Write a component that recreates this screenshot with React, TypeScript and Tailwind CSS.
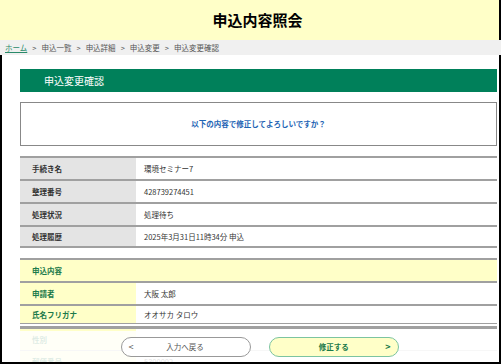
import React from "react";

const font = { fontFamily: '"Noto Sans CJK JP", "Noto Sans", sans-serif' };

function Row1({ label, value, last }: { label: string; value: string; last?: boolean }) {
  return (
    <div className={`flex h-[23px] border-t-2 border-[#a0a0a0] ${last ? "border-b-2" : ""}`}>
      <div className="w-[116px] bg-[#e4e4e4] pl-[12px] flex items-center text-[7.5px] font-bold text-[#333]">{label}</div>
      <div className="flex-1 pl-[8px] flex items-center text-[7.5px] text-[#333]">{value}</div>
    </div>
  );
}

function Row2({ label, value, cls }: { label: string; value: string; cls?: string }) {
  return (
    <div className={`flex h-[23px] border-t-2 border-[#a0a0a0] ${cls ?? ""}`}>
      <div className="w-[116px] bg-[#ffffc8] pl-[12px] flex items-center text-[7.5px] font-bold text-[#1b7a4a]">{label}</div>
      <div className="flex-1 pl-[8px] flex items-center text-[7.5px] text-[#333]">{value}</div>
    </div>
  );
}

export default function App() {
  return (
    <div className="w-[501px] h-[364px] bg-white overflow-hidden flex flex-col" style={font}>
      <div className="h-[40px] bg-[#ffffc8] border-r-2 border-black flex items-center justify-center pl-[16px] shrink-0">
        <span className="text-[15px] font-bold text-black">申込内容照会</span>
      </div>
      <div className="h-[15px] bg-[#f0f0f0] flex items-center pl-[5px] gap-[5px] text-[7.5px] text-[#555] shrink-0">
        <span className="text-[#2a8a6a] underline">ホーム</span>
        <span>&gt;</span>
        <span>申込一覧</span>
        <span>&gt;</span>
        <span>申込詳細</span>
        <span>&gt;</span>
        <span>申込変更</span>
        <span>&gt;</span>
        <span>申込変更確認</span>
      </div>
      <div className="relative flex-1 border-l-2 border-r-2 border-b-2 border-black overflow-hidden">
        <div className="ml-[18px] mr-[2px]">
          <div className="mt-[14px] h-[23px] bg-[#00805a] flex items-center pl-[24px] text-[10px] text-white">申込変更確認</div>
          <div className="mt-[10px] h-[44px] border border-[#888] flex items-center justify-center text-[7.5px] font-bold text-[#1e64b4]">
            以下の内容で修正してよろしいですか？
          </div>
          <div className="mt-[10px]">
            <Row1 label="手続き名" value="環境セミナー7" />
            <Row1 label="整理番号" value="428739274451" />
            <Row1 label="処理状況" value="処理待ち" />
            <Row1 label="処理履歴" value="2025年3月31日11時34分 申込" last />
          </div>
          <div className="mt-[10px]">
            <div className="flex h-[23px] border-t-2 border-[#a0a0a0] bg-[#ffffc8] pl-[12px] items-center text-[7.5px] font-bold text-[#1b7a4a]">申込内容</div>
            <Row2 label="申請者" value="大阪 太郎" />
            <Row2 label="氏名フリガナ" value="オオサカ タロウ" cls="h-[22px] border-b-4 border-double border-b-[#a0a0a0]" />
            <Row2 label="性別" value="" cls="border-t-0" />
            <div className="flex h-[23px] border-t border-[#ccc]">
              <div className="w-[116px] bg-[#ffffc8] pl-[12px] flex items-center text-[7.5px] font-bold text-[#1b7a4a]">郵便番号</div>
              <div className="flex-1 pl-[8px] flex items-center text-[7.5px] text-[#333]">5300002</div>
            </div>
          </div>
        </div>
        <div className="absolute left-0 right-0 bottom-0 h-[31px] bg-white/85 flex items-center justify-center gap-[18px] pl-[18px]">
          <div className="w-[130px] h-[20px] rounded-full border border-[#999] bg-white flex items-center px-[7px] text-[#555]">
            <span className="text-[9px]">&lt;</span>
            <span className="flex-1 text-center text-[7.5px] pr-[6px]">入力へ戻る</span>
          </div>
          <div className="w-[130px] h-[20px] rounded-full border border-[#7cc4a0] bg-[#ffffc8] flex items-center px-[7px] text-[#1b7a4a]">
            <span className="flex-1 text-center text-[7.5px] font-bold pl-[6px]">修正する</span>
            <span className="text-[9px] font-bold">&gt;</span>
          </div>
        </div>
      </div>
    </div>
  );
}
